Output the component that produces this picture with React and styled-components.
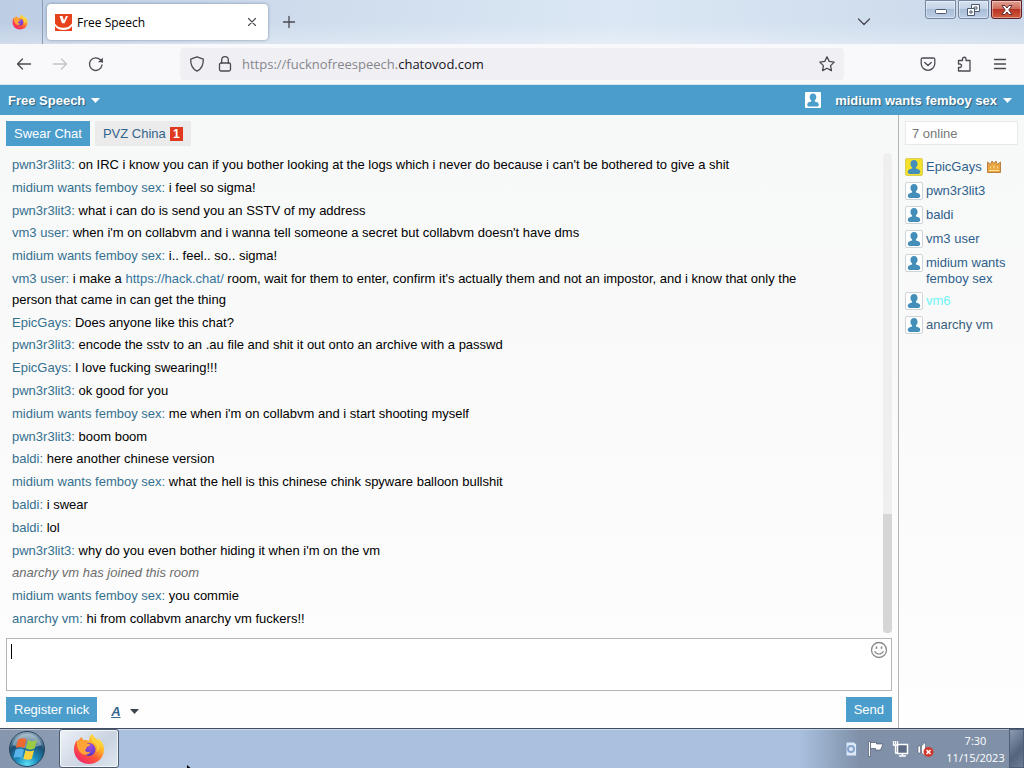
import React, { useState } from 'react';
import styled, { createGlobalStyle } from 'styled-components';

const GlobalStyle = createGlobalStyle`
  * {
    box-sizing: border-box;
  }

  body {
    margin: 0;
    font-family: 'Liberation Sans', Arial, sans-serif;
    font-size: 13px;
    color: #000;
  }

  button,
  input,
  textarea {
    font: inherit;
    color: inherit;
  }

  button {
    padding: 0;
    border: none;
    background: none;
    cursor: pointer;
  }
`;

// Desktop
const Desktop = styled.div`
  display: flex;
  flex-direction: column;
  min-height: 100vh;
  overflow: hidden;
  position: relative;
`;

const IconButton = styled.button`
  display: flex;
  align-items: center;
  justify-content: center;
  width: ${(props) => props.$width || 36}px;
  height: 32px;
  color: ${(props) => (props.$faded ? '#c3c3c9' : '#4a4a52')};
`;

// Browser tab strip
const TabStrip = styled.div`
  display: flex;
  align-items: flex-start;
  height: 44px;
  font-family: 'Open Sans', 'Noto Sans', sans-serif;
  font-size: 12px;
  background:
    linear-gradient(rgba(255, 255, 255, 0) 50%, rgba(255, 255, 255, 0.3)),
    linear-gradient(90deg, #bccde4 0, #cddbec 280px, #dbe7f4 60%, #c9d8ea 100%);
`;

const PinnedTab = styled.div`
  display: flex;
  align-items: center;
  justify-content: center;
  width: 43px;
  height: 44px;
  padding-right: 3px;
  border-right: 1px solid #8d9db3;
`;

const BrowserTab = styled.div`
  display: flex;
  align-items: center;
  gap: 5px;
  width: 221px;
  height: 36px;
  margin: 4px 3px 0 4px;
  padding: 0 4px 0 8px;
  border-radius: 4px;
  background: #fff;
  box-shadow: 0 0 3px rgba(40, 60, 90, 0.5);
`;

const BrowserTabTitle = styled.span`
  flex: 1;
  white-space: nowrap;
`;

const TabStripTail = styled.div`
  flex: 1;
  display: flex;
  justify-content: space-between;
  padding: 6px 43px 0 0;
`;

const WindowControls = styled.div`
  display: flex;
  gap: 2px;
  padding-right: 2px;
`;

const WindowButton = styled.button`
  display: flex;
  align-items: center;
  justify-content: center;
  width: 31px;
  height: 19px;
  border: 1px solid ${(props) => (props.$close ? '#5d2026' : '#7486a0')};
  border-radius: 0 0 3px 3px;
  background: ${(props) =>
    props.$close
      ? 'linear-gradient(#e0a193, #cf6a5a 48%, #b93425 50%, #cf5a3c)'
      : 'linear-gradient(#d5e2f1, #c2d2e6 48%, #a9bdd7 50%, #bdcfe5)'};
  box-shadow: inset 0 0 0 1px rgba(255, 255, 255, 0.4);
`;

// Browser toolbar
const NavBar = styled.div`
  display: flex;
  align-items: center;
  height: 41px;
  padding: 0 6px;
  background: #f9f9fb;
  border-bottom: 1px solid #d8e4ec;
`;

const AddressBar = styled.div`
  flex: 1;
  display: flex;
  align-items: center;
  height: 32px;
  margin: 0 66px;
  border-radius: 4px;
  background: #f0f0f4;
`;

const Address = styled.a`
  flex: 1;
  padding-left: 6px;
  font-family: 'Open Sans', 'Noto Sans', sans-serif;
  font-size: 13px;
  color: #86868c;
  text-decoration: none;
  white-space: nowrap;

  strong {
    font-weight: 400;
    color: #15141a;
  }
`;

// Chat page
const SiteHeader = styled.header`
  display: flex;
  align-items: center;
  justify-content: space-between;
  height: 30px;
  padding: 0 12px 0 8px;
  background: #4b9dcc;
`;

const HeaderButton = styled.button`
  display: flex;
  align-items: center;
  gap: 6px;
  font-weight: 700;
  color: #fff;
  text-shadow: 1px 1px 1px rgba(0, 0, 0, 0.4);
`;

const HeaderAvatar = styled.span`
  display: flex;
  margin-right: 8px;
`;

const ChatPage = styled.div`
  flex: 1;
  display: flex;
  background: linear-gradient(#f7f8f8, #fafafa 50%, #fefefe);
`;

const ChatMain = styled.main`
  flex: 1;
  display: flex;
  flex-direction: column;
  min-width: 0;
  padding: 6px;
`;

const RoomTabs = styled.div`
  display: flex;
  gap: 5px;
`;

const RoomTab = styled.button`
  display: flex;
  align-items: center;
  gap: 4px;
  height: 25px;
  padding: 0 8px;
  color: ${(props) => (props.$active ? '#fff' : '#34648c')};
  background: ${(props) => (props.$active ? '#4b9dcc' : '#ebebeb')};
`;

const UnreadBadge = styled.span`
  width: 13px;
  line-height: 14px;
  font-size: 12px;
  font-weight: 700;
  text-align: center;
  color: #fff;
  background: #e0391f;
`;

const MessageArea = styled.div`
  flex: 1;
  display: flex;
  margin: 7px 0 5px;
`;

const MessageList = styled.ul`
  flex: 1;
  display: flex;
  flex-direction: column;
  justify-content: space-between;
  margin: 0;
  padding: 1px 60px 4px 6px;
  list-style: none;
`;

const Message = styled.li`
  line-height: 21px;
  font-style: ${(props) => (props.$system ? 'italic' : 'normal')};
  color: ${(props) => (props.$system ? '#6c6c6c' : '#000')};
`;

const Author = styled.span`
  color: #35708f;
`;

const MessageLink = styled.a`
  color: #35759c;
  text-decoration: none;
`;

const ScrollTrack = styled.div`
  display: flex;
  flex-direction: column;
  justify-content: flex-end;
  width: 9px;
  border-radius: 4px;
  background: #efefef;
`;

const ScrollThumb = styled.div`
  height: 119px;
  border-radius: 0 0 4px 4px;
  background: #d6d6d6;
`;

const Composer = styled.div`
  position: relative;
  height: 53px;
`;

const MessageInput = styled.textarea`
  display: block;
  width: 100%;
  height: 100%;
  padding: 4px 30px 4px 5px;
  border: 1px solid #b3b6b8;
  background: #fff;
  outline: none;
  resize: none;
`;

const Caret = styled.span`
  position: absolute;
  top: 6px;
  left: 5px;
  width: 1px;
  height: 15px;
  background: #000;
`;

const SmileButton = styled.button`
  position: absolute;
  top: 3px;
  right: 4px;
  display: flex;
`;

const ComposerBar = styled.div`
  display: flex;
  align-items: center;
  margin-top: 6px;
`;

const ActionButton = styled.button`
  height: 25px;
  padding: 0 8px;
  color: #fff;
  background: #4b9dcc;
`;

const FontButton = styled.button`
  display: flex;
  align-items: center;
  gap: 9px;
  margin: 4px auto 0 14px;
  font-weight: 700;
  font-style: italic;
  text-decoration: underline;
  color: #34648c;
`;

// Users online
const Sidebar = styled.aside`
  width: 126px;
  padding: 6px;
  border-left: 1px solid #b3b6b8;
`;

const UserSearch = styled.input`
  display: block;
  width: 100%;
  height: 24px;
  padding: 0 6px;
  border: 1px solid #e9e9e9;
  background: #fff;
  outline: none;

  &::placeholder {
    color: #777;
    opacity: 1;
  }
`;

const UserList = styled.ul`
  display: flex;
  flex-direction: column;
  gap: 6px;
  margin: 13px 0 0;
  padding: 0;
  list-style: none;
`;

const User = styled.li`
  display: flex;
  gap: 3px;
  line-height: 16px;
  color: ${(props) => props.$color || '#2f5f8c'};
`;

const Avatar = styled.span`
  flex: none;
  display: flex;
  align-items: center;
  justify-content: center;
  width: 18px;
  height: 18px;
  border: 1px solid ${(props) => (props.$gold ? '#d8cf5a' : '#cfd4d8')};
  border-radius: 2px;
  background: ${(props) => (props.$gold ? '#f6e12a' : '#fff')};
`;

const UserName = styled.span`
  margin-bottom: -1px;
  padding-top: 1px;

  svg {
    margin-left: 5px;
    vertical-align: -2px;
  }
`;

// Taskbar
const Taskbar = styled.footer`
  display: flex;
  height: 40px;
  border-top: 1px solid #3f4d63;
  font-family: 'Open Sans', 'Noto Sans', sans-serif;
  font-size: 11px;
  color: #fff;
  background: linear-gradient(90deg, #8696ae 0, #8b9bb3 59px, #a9c0de 119px, #a9c1df 78%, #7f90a8 84%, #8090a7 100%);
  box-shadow: inset 0 1px 0 rgba(255, 255, 255, 0.4);
`;

const StartButton = styled.button`
  display: flex;
  align-items: center;
  justify-content: center;
  width: 59px;
  padding-right: 5px;
`;

const TaskButton = styled.button`
  display: flex;
  align-items: center;
  justify-content: center;
  width: 60px;
  border: 1px solid #4c5a70;
  border-radius: 3px;
  background: linear-gradient(135deg, #eef2f7, #c9d3e1 60%, #dfe6ef);
  box-shadow: inset 0 0 0 1px rgba(255, 255, 255, 0.7);
`;

const Tray = styled.div`
  display: flex;
  align-items: center;
  gap: 8px;
  margin-left: auto;
`;

const Clock = styled.div`
  width: 67px;
  line-height: 17px;
  text-align: center;
  white-space: nowrap;
`;

const ShowDesktop = styled.button`
  width: 15px;
  border: 1px solid #4e5e76;
  background: linear-gradient(135deg, #8b9ab0, #54647c 60%, #6c7c94);
`;

const Pointer = styled.div`
  position: absolute;
  left: 187px;
  bottom: 0;
  display: flex;
`;

const FirefoxLogo = ({ size, id }) => (
  <svg width={size} height={size} viewBox="0 0 32 32" aria-hidden="true">
    <defs>
      <linearGradient id={`${id}-body`} x1="0.85" y1="0.1" x2="0.2" y2="0.95">
        <stop offset="0" stopColor="#fff04a" />
        <stop offset="0.3" stopColor="#ffb02a" />
        <stop offset="0.6" stopColor="#ff5a38" />
        <stop offset="1" stopColor="#f0246a" />
      </linearGradient>
      <radialGradient id={`${id}-globe`} cx="0.6" cy="0.3" r="0.8">
        <stop offset="0" stopColor="#a04ae0" />
        <stop offset="1" stopColor="#4b38c0" />
      </radialGradient>
    </defs>
    <path
      fill={`url(#${id}-body)`}
      d="M19 1c1 2.500 3.500 4 5.500 6.500 1-.5.8-1.500.7-2C29 8 31.500 12.500 31 17.500 30.500 25.500 24 31 16 31 7.500 31 1 24.500 1 16.500c0-4 1.200-7 3-9.500.1 1 .4 1.600.8 2 1-2.500 2.500-4 4.200-5 .1 1.400.6 2.500 1.500 3.200 2-.4 4 .1 5.500.8 0-3 1-5.500 3-7z"
    />
    <circle cx="16" cy="16.500" r="6.500" fill={`url(#${id}-globe)`} />
    <path
      fill="#ffa436"
      d="M4 8c3.500-.8 7.500-.5 10 2.500 1.500.2 3 .6 3.500 1.300-.4 1.400-3.500 1.700-4 2.700-.4 1.200 0 2-1.500 2.500.5 2 3 2.800 5.500 1.500-1.500 3.300-5.500 4.500-9 2C5.500 18.500 3.500 13.500 4 8z"
    />
    <path
      fill="#ffd03c"
      d="M19 1c-2.500 3.500-1 6.500 2 8.500 3 2.200 4 5.500 2.500 9.500 3.500-2.500 4.500-6.500 2.500-10.500C24 5.500 20 4.500 19 1z"
    />
  </svg>
);

const Favicon = () => (
  <svg width="17" height="17" viewBox="0 0 17 17" aria-hidden="true">
    <rect width="17" height="17" fill="#e8421d" />
    <path d="M4.500 2h3L9 6.500 11 2h2L9.600 9.300H7z" fill="#fff" />
    <path d="M0 9.500c2.500 3.500 5 4.300 8.500 4.300s6-1 8.500-4.300V12c-2 3-5 4-8.500 4S2 15 0 12z" fill="#fff" />
  </svg>
);

const LineIcon = ({ size = 16, children }) => (
  <svg
    width={size}
    height={size}
    viewBox="0 0 16 16"
    fill="none"
    stroke="currentColor"
    strokeWidth="1.300"
    strokeLinecap="round"
    strokeLinejoin="round"
    aria-hidden="true"
  >
    {children}
  </svg>
);

const CaretDown = ({ color }) => (
  <svg width="9" height="5" viewBox="0 0 9 5" aria-hidden="true">
    <path d="M0 0h9L4.500 5z" fill={color} />
  </svg>
);

const personPath =
  'M8 1.500c2 0 3.300 1.400 3.300 3.400 0 1.500-.6 2.700-1.500 3.400v1.200c2.500.5 4 1.300 4 3.200 0 .9-.8 1.800-1.800 1.800H4c-1 0-1.800-.9-1.800-1.800 0-1.900 1.500-2.700 4-3.200V8.300C5.300 7.600 4.700 6.400 4.700 4.900 4.700 2.900 6 1.500 8 1.500z';

const PersonIcon = () => (
  <svg width="14" height="16" viewBox="1.500 1 13 14" aria-hidden="true">
    <path fill="#438fba" d={personPath} />
  </svg>
);

const CrownIcon = () => (
  <svg width="14" height="13" viewBox="0 0 14 13" aria-hidden="true">
    <path d="M.5 12.500V2L3.500 4.500 5 1l2 2.500L9 1l1.500 3.500L13.500 2v10.500z" fill="#eaa53f" stroke="#b98244" />
    <path d="M2 10.500h10M3.500 6.500v2M7 5.500v3M10.500 6.500v2" stroke="#fbe3a0" />
  </svg>
);

const WindowsOrb = () => (
  <svg width="38" height="38" viewBox="0 0 38 38" aria-hidden="true">
    <defs>
      <radialGradient id="orb" cx="0.5" cy="0.95" r="0.9">
        <stop offset="0" stopColor="#5fe0f5" />
        <stop offset="0.35" stopColor="#1c8dbd" />
        <stop offset="0.7" stopColor="#1c5076" />
        <stop offset="1" stopColor="#8aa5b8" />
      </radialGradient>
    </defs>
    <circle cx="19" cy="19" r="17.500" fill="url(#orb)" stroke="#27435c" />
    <path d="M4.500 15a15 15 0 0129 0c-8 3.500-20 4-29 0z" fill="#fff" opacity="0.35" />
    <path d="M10 9.500c3.200-1.700 5.800-1.600 8.500-.2l-2.200 8.700c-2.700-1.500-5.300-1.500-8.400 0z" fill="#ee6a30" />
    <path d="M20 10c3 1.500 5.700 1.500 9 0l-2.400 8.600c-3 1.400-5.600 1.400-8.700 0z" fill="#9bcb45" />
    <path d="M7.500 19.700c3-1.500 5.700-1.400 8.400 0l-2.200 8.300c-2.700-1.400-5.300-1.300-8.200 0z" fill="#5ab4ec" />
    <path d="M17.500 20.300c2.900 1.400 5.600 1.400 8.600 0l-2.300 8.500c-2.900 1.300-5.500 1.300-8.500-.1z" fill="#fcd23c" />
  </svg>
);

const messages = [
  { author: 'pwn3r3lit3', text: "on IRC i know you can if you bother looking at the logs which i never do because i can't be bothered to give a shit" },
  { author: 'midium wants femboy sex', text: 'i feel so sigma!' },
  { author: 'pwn3r3lit3', text: 'what i can do is send you an SSTV of my address' },
  { author: 'vm3 user', text: "when i'm on collabvm and i wanna tell someone a secret but collabvm doesn't have dms" },
  { author: 'midium wants femboy sex', text: 'i.. feel.. so.. sigma!' },
  {
    author: 'vm3 user',
    text: (
      <>
        i make a <MessageLink href="https://hack.chat/">https://hack.chat/</MessageLink> room, wait for them to enter,
        confirm it's actually them and not an impostor, and i know that only the person that came in can get the thing
      </>
    ),
  },
  { author: 'EpicGays', text: 'Does anyone like this chat?' },
  { author: 'pwn3r3lit3', text: 'encode the sstv to an .au file and shit it out onto an archive with a passwd' },
  { author: 'EpicGays', text: 'I love fucking swearing!!!' },
  { author: 'pwn3r3lit3', text: 'ok good for you' },
  { author: 'midium wants femboy sex', text: "me when i'm on collabvm and i start shooting myself" },
  { author: 'pwn3r3lit3', text: 'boom boom' },
  { author: 'baldi', text: 'here another chinese version' },
  { author: 'midium wants femboy sex', text: 'what the hell is this chinese chink spyware balloon bullshit' },
  { author: 'baldi', text: 'i swear' },
  { author: 'baldi', text: 'lol' },
  { author: 'pwn3r3lit3', text: "why do you even bother hiding it when i'm on the vm" },
  { system: true, text: 'anarchy vm has joined this room' },
  { author: 'midium wants femboy sex', text: 'you commie' },
  { author: 'anarchy vm', text: 'hi from collabvm anarchy vm fuckers!!' },
];

const users = [
  { name: 'EpicGays', owner: true },
  { name: 'pwn3r3lit3' },
  { name: 'baldi' },
  { name: 'vm3 user' },
  { name: 'midium wants femboy sex' },
  { name: 'vm6', color: '#6ff5f5' },
  { name: 'anarchy vm', color: '#3c5f7c' },
];

const BrowserChrome = () => (
  <>
    <TabStrip>
      <PinnedTab>
        <FirefoxLogo size={16} id="pinned" />
      </PinnedTab>
      <BrowserTab>
        <Favicon />
        <BrowserTabTitle>Free Speech</BrowserTabTitle>
        <IconButton $width={24} aria-label="Close tab">
          <LineIcon size={14}>
            <path d="M4 4l8 8M12 4l-8 8" />
          </LineIcon>
        </IconButton>
      </BrowserTab>
      <TabStripTail>
        <IconButton aria-label="New tab">
          <LineIcon>
            <path d="M8 2.500v11M2.500 8h11" />
          </LineIcon>
        </IconButton>
        <IconButton aria-label="List all tabs">
          <LineIcon>
            <path d="M2.500 5L8 10.500 13.500 5" />
          </LineIcon>
        </IconButton>
      </TabStripTail>
      <WindowControls>
        <WindowButton aria-label="Minimize">
          <svg width="12" height="12" viewBox="0 0 12 12">
            <rect x="0.500" y="5.500" width="11" height="4" rx="1" fill="#fff" stroke="#4d5a6e" />
          </svg>
        </WindowButton>
        <WindowButton aria-label="Restore">
          <svg width="13" height="12" viewBox="0 0 13 12" fill="#fff" stroke="#4d5a6e">
            <path d="M4.500.5h8v7h-8z" />
            <path d="M7 3h3v2H7z" />
            <path d="M.5 4.500h7v7h-7z" />
            <path d="M3 7h2v2H3z" />
          </svg>
        </WindowButton>
        <WindowButton $close aria-label="Close">
          <svg width="12" height="10" viewBox="0 0 12 10">
            <path d="M1 .5h3l2 2.500L8 .5h3L7.800 5 11 9.500H8L6 7 4 9.500H1L4.200 5z" fill="#fff" stroke="#5f3038" />
          </svg>
        </WindowButton>
      </WindowControls>
    </TabStrip>
    <NavBar>
      <IconButton aria-label="Back">
        <LineIcon>
          <path d="M14.500 8H1.500M6.500 3l-5 5 5 5" />
        </LineIcon>
      </IconButton>
      <IconButton $faded aria-label="Forward">
        <LineIcon>
          <path d="M1.500 8h13M9.500 3l5 5-5 5" />
        </LineIcon>
      </IconButton>
      <IconButton aria-label="Reload">
        <LineIcon>
          <path d="M14 9a6.300 6.300 0 11-1.700-5.200L14.500 6" />
          <path d="M14.800 1.500v4.800H10z" fill="currentColor" stroke="none" />
        </LineIcon>
      </IconButton>
      <AddressBar>
        <IconButton $width={34} aria-label="Tracking protection">
          <LineIcon>
            <path d="M8 .8l6.300 2.400c.2 5.500-1.600 9.600-6.300 12C3.300 12.800 1.500 8.700 1.700 3.200z" />
          </LineIcon>
        </IconButton>
        <IconButton $width={22} aria-label="Connection secure">
          <LineIcon>
            <rect x="2.500" y="7" width="11" height="8" rx="1.500" />
            <path d="M4.700 7V4a3.300 3.300 0 016.600 0v3" />
          </LineIcon>
        </IconButton>
        <Address href="https://fucknofreespeech.chatovod.com">
          https://fucknofreespeech.<strong>chatovod.com</strong>
        </Address>
        <IconButton $width={34} aria-label="Bookmark this page">
          <LineIcon>
            <path d="M8 .8l2.200 4.600 5 .7-3.600 3.500.8 5L8 12.200l-4.400 2.400.8-5L.8 6.100l5-.7z" />
          </LineIcon>
        </IconButton>
      </AddressBar>
      <IconButton aria-label="Save to Pocket">
        <LineIcon>
          <path d="M2.500 2h11a1.300 1.300 0 011.300 1.300V7.500a6.800 6.800 0 01-13.600 0V3.300A1.300 1.300 0 012.500 2z" />
          <path d="M4.800 6.500L8 9.500l3.200-3" />
        </LineIcon>
      </IconButton>
      <IconButton aria-label="Extensions">
        <LineIcon>
          <path d="M2.500 15V11.500h1.300a1.700 1.700 0 100-3.500H2.500V4.500h4V3a1.700 1.700 0 013.500 0v1.500h4V15z" />
        </LineIcon>
      </IconButton>
      <IconButton aria-label="Open application menu">
        <LineIcon>
          <path d="M2.500 3.500h11M2.500 8h11M2.500 12.500h11" />
        </LineIcon>
      </IconButton>
    </NavBar>
  </>
);

const Chat = () => {
  const [draft, setDraft] = useState('');
  const [filter, setFilter] = useState('');

  return (
    <ChatPage>
      <ChatMain>
        <RoomTabs>
          <RoomTab $active>Swear Chat</RoomTab>
          <RoomTab>
            PVZ China <UnreadBadge>1</UnreadBadge>
          </RoomTab>
        </RoomTabs>
        <MessageArea>
          <MessageList>
            {messages.map((message, index) => (
              <Message key={index} $system={message.system}>
                {message.author && <Author>{message.author}:</Author>} {message.text}
              </Message>
            ))}
          </MessageList>
          <ScrollTrack>
            <ScrollThumb />
          </ScrollTrack>
        </MessageArea>
        <Composer>
          <MessageInput aria-label="Message" value={draft} onChange={(e) => setDraft(e.target.value)} />
          {!draft && <Caret />}
          <SmileButton aria-label="Smileys">
            <svg width="18" height="18" viewBox="0 0 18 18" fill="none" stroke="#8a8a8a" strokeLinecap="round">
              <circle cx="9" cy="9" r="7.500" strokeWidth="1.300" />
              <path d="M4.800 10.500c1.500 3.300 6.900 3.300 8.400 0" strokeWidth="1.200" />
              <path d="M6.500 6v1.200M11.500 6v1.200" strokeWidth="1.600" />
            </svg>
          </SmileButton>
        </Composer>
        <ComposerBar>
          <ActionButton>Register nick</ActionButton>
          <FontButton aria-label="Font style">
            A <CaretDown color="#3b4650" />
          </FontButton>
          <ActionButton>Send</ActionButton>
        </ComposerBar>
      </ChatMain>
      <Sidebar>
        <UserSearch
          aria-label="Search users"
          placeholder="7 online"
          value={filter}
          onChange={(e) => setFilter(e.target.value)}
        />
        <UserList>
          {users
            .filter((user) => user.name.includes(filter))
            .map((user) => (
              <User key={user.name} $color={user.color}>
                <Avatar $gold={user.owner}>
                  <PersonIcon />
                </Avatar>
                <UserName>
                  {user.name}
                  {user.owner && <CrownIcon />}
                </UserName>
              </User>
            ))}
        </UserList>
      </Sidebar>
    </ChatPage>
  );
};

const App = () => (
  <>
    <GlobalStyle />
    <Desktop>
      <BrowserChrome />
      <SiteHeader>
        <HeaderButton>
          Free Speech <CaretDown color="#fff" />
        </HeaderButton>
        <HeaderButton>
          <HeaderAvatar>
            <svg width="16" height="16" viewBox="0 0 16 16" aria-hidden="true">
              <rect width="16" height="16" rx="1" fill="#fff" />
              <path fill="#4b9dcc" d={personPath} />
            </svg>
          </HeaderAvatar>
          midium wants femboy sex <CaretDown color="#fff" />
        </HeaderButton>
      </SiteHeader>
      <Chat />
      <Taskbar>
        <StartButton aria-label="Start">
          <WindowsOrb />
        </StartButton>
        <TaskButton aria-label="Firefox">
          <FirefoxLogo size={32} id="task" />
        </TaskButton>
        <Tray>
          <svg width="16" height="18" viewBox="0 0 16 18" aria-hidden="true">
            <path d="M3 2h8l2.500 2.500V16H3z" fill="#dfe9f5" stroke="#7f9abf" />
            <circle cx="8" cy="9" r="3" fill="none" stroke="#86a6d0" strokeWidth="2" />
          </svg>
          <svg width="17" height="18" viewBox="0 0 17 18" aria-hidden="true">
            <path d="M1.500 1.500h2v15h-2z" fill="#fff" stroke="#3c485a" strokeWidth="0.600" />
            <path d="M3.500 2.500h6V4h6.500l-2.500 6h-5V8.500h-5z" fill="#fff" stroke="#3c485a" strokeWidth="0.600" />
          </svg>
          <svg width="17" height="18" viewBox="0 0 17 18" fill="none" stroke="#fff" aria-hidden="true">
            <path d="M5.500 4.500h10v9h-10z" fill="#5d6c84" strokeWidth="1.500" />
            <path d="M7 16h7M10.500 13.500V16" strokeWidth="1.500" />
            <path d="M1.500 1v4h4V1M3.500 1v3M3.500 5v8H6" strokeWidth="1.300" />
          </svg>
          <svg width="17" height="18" viewBox="0 0 17 18" aria-hidden="true">
            <path d="M1 6h2.500v7H1zM4.500 6L8.500 2v14l-4-3z" fill="#fff" stroke="#3c485a" strokeWidth="0.500" />
            <circle cx="11.500" cy="12" r="5" fill="#d1372e" />
            <path d="M9.500 10l4 4M13.500 10l-4 4" stroke="#fff" strokeWidth="1.500" />
          </svg>
          <Clock>
            7:30
            <br />
            11/15/2023
          </Clock>
        </Tray>
        <ShowDesktop aria-label="Show desktop" />
      </Taskbar>
      <Pointer>
        <svg width="4" height="3" viewBox="0 0 4 3" aria-hidden="true">
          <path d="M0 0l3.500 3H0z" fill="#000" />
        </svg>
      </Pointer>
    </Desktop>
  </>
);

export default App;
